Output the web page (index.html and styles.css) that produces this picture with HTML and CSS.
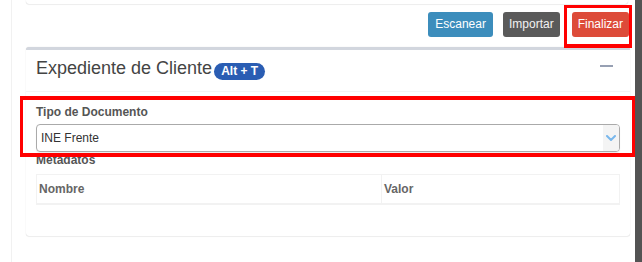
FILE: index.html
```html
<!DOCTYPE html>
<html lang="es">
<head>
<meta charset="utf-8">
<title>Expediente de Cliente</title>
<link rel="stylesheet" href="styles.css">
</head>
<body>
<div class="screen">
  <main class="content">
    <div class="box box-top"></div>

    <div class="actions">
      <button class="btn btn-primary">Escanear</button>
      <button class="btn btn-gray">Importar</button>
      <span class="mark mark-btn"><button class="btn btn-danger">Finalizar</button></span>
    </div>

    <section class="box box-main">
      <div class="box-header">
        <h3 class="box-title">Expediente de Cliente</h3>
        <span class="badge">Alt + T</span>
        <button class="tool-btn" aria-label="Minimizar"><span class="minus"></span></button>
      </div>
      <div class="box-body">
        <div class="form-group mark mark-form">
          <label class="field-label">Tipo de Documento</label>
          <div class="select">
            <span class="select-value">INE Frente</span>
            <span class="select-arrow">
              <svg width="10" height="6" viewBox="0 0 10 6"><polyline points="1,1 5,5 9,1" fill="none" stroke="#79b7ec" stroke-width="2" stroke-linecap="round" stroke-linejoin="round"/></svg>
            </span>
          </div>
        </div>
        <label class="field-label meta-label">Metadatos</label>
        <table class="meta-table">
          <thead>
            <tr><th class="col-name">Nombre</th><th>Valor</th></tr>
          </thead>
        </table>
      </div>
    </section>
  </main>
  <div class="scrollbar"></div>
</div>
</body>
</html>
```

FILE: styles.css
```css
* { box-sizing: border-box; }

html, body {
  margin: 0;
  padding: 0;
  background: #ffffff;
  overflow: hidden;
}

body {
  font-family: "Liberation Sans", Arial, sans-serif;
  font-size: 12px;
  color: #333;
}

.screen {
  display: flex;
  height: 262px;
  padding-left: 11px;
}

.content {
  flex: 1;
  border-left: 1px solid #f1f1f1;
}

.scrollbar {
  width: 7px;
  background: #535353;
}

/* Boxes */
.box {
  background: #fff;
  border-radius: 3px;
  box-shadow: 0 0 1px rgba(0, 0, 0, 0.18), 0 1px 1px rgba(0, 0, 0, 0.06);
  margin: 0 5px 0 14px;
}

.box-top {
  height: 4px;
  margin-right: 7px;
  border-radius: 0 0 3px 3px;
}

/* Action buttons */
.actions {
  display: flex;
  justify-content: flex-end;
  align-items: center;
  margin: 8px 6px 0 0;
}

.btn {
  height: 25px;
  padding: 0 6px;
  border: 0;
  border-radius: 3px;
  font-family: "Liberation Sans", Arial, sans-serif;
  font-size: 12px;
  color: #fff;
  line-height: 25px;
  display: block;
}

.btn-primary { background: #3c8dbc; padding: 0 7px; }
.btn-gray { background: #5a5a5a; margin-left: 10px; color: #f2f2f2; }
.btn-danger { background: #dd4b39; }

.mark { position: relative; }
.mark::after {
  content: "";
  position: absolute;
  border: 3px solid #ff0000;
  pointer-events: none;
}

.mark-btn {
  display: block;
  margin-left: 12px;
}
.mark-btn::after {
  top: -7px;
  left: -8px;
  right: -3px;
  bottom: -11px;
  border-width: 3px 3px 4px 3px;
}

/* Main box */
.box-main {
  margin-top: 10px;
  border-top: 3px solid #d2d6de;
}

.box-header {
  display: flex;
  align-items: flex-start;
  height: 42px;
  padding: 9px 10px 0 10px;
  border-bottom: 1px solid #f4f4f4;
}

.box-title {
  margin: 0;
  font-size: 18px;
  line-height: 18px;
  font-weight: normal;
  color: #444;
}

.badge {
  margin: 4px 0 0 2px;
  height: 17px;
  padding: 0 7px;
  border-radius: 9px;
  background: #2a5db3;
  color: #fff;
  font-weight: bold;
  font-size: 12px;
  line-height: 17px;
}

.tool-btn {
  margin-left: auto;
  margin-right: 7px;
  padding: 0;
  border: 0;
  background: transparent;
  display: block;
}

.minus {
  display: block;
  width: 13px;
  height: 2px;
  margin-top: 6px;
  background: #97a0b3;
}

.box-body {
  padding: 12px 10px 11px 10px;
}

.field-label {
  display: block;
  font-weight: bold;
  font-size: 12px;
  line-height: 17px;
  color: #555;
}

.form-group .field-label { margin-bottom: 3px; }

.mark-form::after {
  top: -8px;
  left: -16px;
  right: -15px;
  bottom: -5px;
  border-width: 4px 3px 4px 3px;
}

.select {
  display: flex;
  align-items: center;
  height: 28px;
  border: 1px solid #aaaaaa;
  border-radius: 4px;
  overflow: hidden;
  box-shadow: 0 1px 1px rgba(0, 0, 0, 0.08);
}

.select-value {
  flex: 1;
  padding-left: 4px;
  font-size: 12px;
  color: #333;
}

.select-arrow {
  width: 16px;
  align-self: stretch;
  background: #f4f4f4;
  display: flex;
  align-items: center;
  justify-content: center;
}

.meta-label { margin-bottom: 5px; }

.meta-table {
  width: 100%;
  border-collapse: collapse;
  margin-bottom: 20px;
  border: 1px solid #f2f2f2;
}

.meta-table th {
  height: 29px;
  padding: 0 2px;
  text-align: left;
  font-size: 12px;
  font-weight: bold;
  color: #666;
  border-bottom: 2px solid #f2f2f2;
  border-left: 1px solid #f2f2f2;
  vertical-align: middle;
}

.meta-table .col-name { width: 345px; }
```
